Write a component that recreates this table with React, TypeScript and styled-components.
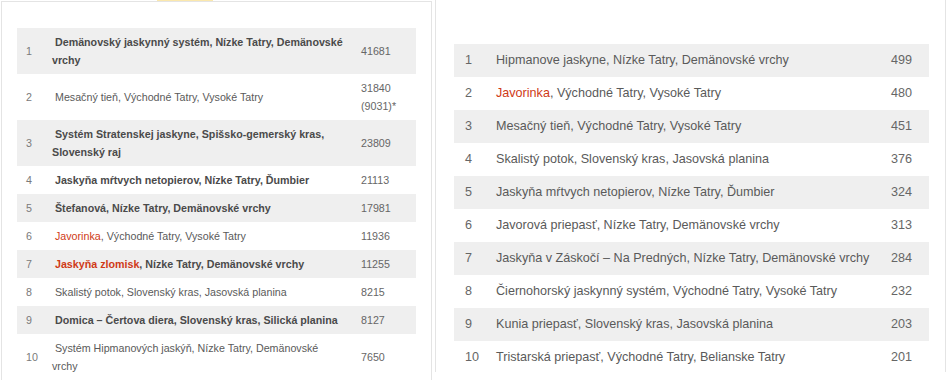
import React from 'react'
import styled, { createGlobalStyle } from 'styled-components'

const GlobalStyle = createGlobalStyle`
  html, body {
    margin: 0;
    padding: 0;
    background: #fff;
  }
  body {
    font-family: "Liberation Sans", Arial, sans-serif;
    color: #555;
  }
`

type Part = { text: string; red?: boolean }
type Row = { parts: Part[]; value: string; bold?: boolean }

// "\n" marks where the original page breaks a long name
const longest: Row[] = [
  { parts: [{ text: 'Demänovský jaskynný systém, Nízke Tatry, Demänovské\nvrchy' }], value: '41681', bold: true },
  { parts: [{ text: 'Mesačný tieň, Východné Tatry, Vysoké Tatry' }], value: '31840 (9031)*' },
  { parts: [{ text: 'Systém Stratenskej jaskyne, Spišsko-gemerský kras,\nSlovenský raj' }], value: '23809', bold: true },
  { parts: [{ text: 'Jaskyňa mŕtvych netopierov, Nízke Tatry, Ďumbier' }], value: '21113', bold: true },
  { parts: [{ text: 'Štefanová, Nízke Tatry, Demänovské vrchy' }], value: '17981', bold: true },
  { parts: [{ text: 'Javorinka', red: true }, { text: ', Východné Tatry, Vysoké Tatry' }], value: '11936' },
  { parts: [{ text: 'Jaskyňa zlomisk', red: true }, { text: ', Nízke Tatry, Demänovské vrchy' }], value: '11255', bold: true },
  { parts: [{ text: 'Skalistý potok, Slovenský kras, Jasovská planina' }], value: '8215' },
  { parts: [{ text: 'Domica – Čertova diera, Slovenský kras, Silická planina' }], value: '8127', bold: true },
  { parts: [{ text: 'Systém Hipmanových jaskýň, Nízke Tatry, Demänovské\nvrchy' }], value: '7650' },
]

const deepest: Row[] = [
  { parts: [{ text: 'Hipmanove jaskyne, Nízke Tatry, Demänovské vrchy' }], value: '499' },
  { parts: [{ text: 'Javorinka', red: true }, { text: ', Východné Tatry, Vysoké Tatry' }], value: '480' },
  { parts: [{ text: 'Mesačný tieň, Východné Tatry, Vysoké Tatry' }], value: '451' },
  { parts: [{ text: 'Skalistý potok, Slovenský kras, Jasovská planina' }], value: '376' },
  { parts: [{ text: 'Jaskyňa mŕtvych netopierov, Nízke Tatry, Ďumbier' }], value: '324' },
  { parts: [{ text: 'Javorová priepasť, Nízke Tatry, Demänovské vrchy' }], value: '313' },
  { parts: [{ text: 'Jaskyňa v Záskočí – Na Predných, Nízke Tatry, Demänovské vrchy' }], value: '284' },
  { parts: [{ text: 'Čiernohorský jaskynný systém, Východné Tatry, Vysoké Tatry' }], value: '232' },
  { parts: [{ text: 'Kunia priepasť, Slovenský kras, Jasovská planina' }], value: '203' },
  { parts: [{ text: 'Tristarská priepasť, Východné Tatry, Belianske Tatry' }], value: '201' },
]

const Page = styled.div`
  display: flex;
  align-items: flex-start;
  gap: 3px;
  padding-left: 1px;
  height: 380px;
  overflow: hidden;
`

const LeftColumn = styled.div`
  display: flex;
  flex-direction: column;
  width: 431px;
`

const TabStrip = styled.div`
  height: 1px;
  padding-left: 156px;
`

const TabMark = styled.div`
  width: 56px;
  height: 2px;
  background: #fbe8ad;
`

const Panel = styled.div<{ $top: number; $padLeft: number; $padRight: number; $topBorder?: boolean }>`
  box-sizing: border-box;
  border: 1px solid #e4e4e4;
  border-top: ${({ $topBorder }) => ($topBorder ? '1px solid #e4e4e4' : 'none')};
  border-bottom: none;
  padding: ${({ $top, $padLeft, $padRight }) => `${$top}px ${$padRight}px 0 ${$padLeft}px`};
  height: 400px;
`

const RightPanel = styled(Panel)`
  width: 511px;
  height: 372px;
`

const Table = styled.table<{ $width: number }>`
  width: ${({ $width }) => $width}px;
  border-collapse: collapse;
  table-layout: fixed;
`

const Tr = styled.tr`
  &:nth-child(odd) {
    background: #efefef;
  }
`

const Cell = styled.td<{ $small?: boolean; $bold?: boolean; $padLeft: number; $padRight?: number }>`
  vertical-align: middle;
  white-space: pre-line;
  font-size: ${({ $small }) => ($small ? '10.7px' : '12.6px')};
  line-height: ${({ $small }) => ($small ? '18px' : '21px')};
  padding: ${({ $small }) => ($small ? '5px' : '6px')} ${({ $padRight }) => $padRight ?? 0}px
    ${({ $small }) => ($small ? '5px' : '6px')} ${({ $padLeft }) => $padLeft}px;
  font-weight: ${({ $bold }) => ($bold ? 700 : 400)};
  color: ${({ $bold }) => ($bold ? '#4a4a4a' : '#5a5a5a')};
`

const NumCell = styled(Cell)<{ $small?: boolean }>`
  color: ${({ $small }) => ($small ? '#7a7a7a' : '#666')};
`

const ValueCell = styled(Cell)`
  color: #666;
`

const Red = styled.span`
  color: #cf3a17;
`

const Name = ({ parts }: { parts: Part[] }) => (
  <>
    {parts.map((p, i) => (p.red ? <Red key={i}>{p.text}</Red> : <React.Fragment key={i}>{p.text}</React.Fragment>))}
  </>
)

const App: React.FC = () => {
  return (
    <>
      <GlobalStyle />
      <Page>
        <LeftColumn>
          <TabStrip>
            <TabMark />
          </TabStrip>
          <Panel $top={26} $padLeft={15} $padRight={15} $topBorder>
            <Table $width={399}>
              <colgroup>
                <col style={{ width: 35 }} />
                <col style={{ width: 300 }} />
                <col style={{ width: 64 }} />
              </colgroup>
              <tbody>
                {longest.map((r, i) => (
                  <Tr key={i}>
                    <NumCell $small $padLeft={9}>{i + 1}</NumCell>
                    <Cell $small $bold={r.bold} $padLeft={0} $padRight={2}>
                      {'\u00a0'}
                      <Name parts={r.parts} />
                    </Cell>
                    <ValueCell $small $padLeft={9} $padRight={6}>{r.value}</ValueCell>
                  </Tr>
                ))}
              </tbody>
            </Table>
          </Panel>
        </LeftColumn>
        <RightPanel $top={44} $padLeft={18} $padRight={16}>
          <Table $width={475}>
            <colgroup>
              <col style={{ width: 42 }} />
              <col style={{ width: 385 }} />
              <col style={{ width: 48 }} />
            </colgroup>
            <tbody>
              {deepest.map((r, i) => (
                <Tr key={i}>
                  <NumCell $padLeft={11}>{i + 1}</NumCell>
                  <Cell $padLeft={0} $padRight={6}>
                    <Name parts={r.parts} />
                  </Cell>
                  <ValueCell $padLeft={10}>{r.value}</ValueCell>
                </Tr>
              ))}
            </tbody>
          </Table>
        </RightPanel>
      </Page>
    </>
  )
}

export default App
